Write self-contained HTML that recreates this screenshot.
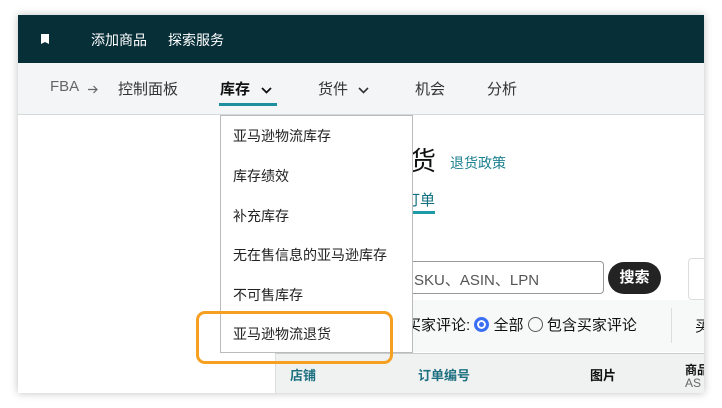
<!DOCTYPE html>
<html><head><meta charset="utf-8"><style>
*{margin:0;padding:0;box-sizing:border-box}
body{width:722px;height:408px;background:#fff;position:relative;overflow:hidden;font-family:"Liberation Sans","Noto Sans CJK SC",sans-serif;color:#0f1111}
.page{position:absolute;left:18px;top:15px;width:686px;height:378px;background:#fff;box-shadow:0 0 8px rgba(0,0,0,.25);overflow:hidden}
.hdr{position:absolute;left:0;top:0;width:100%;height:48px;background:#072f38;color:#fff;font-size:14px}
.hdr span{position:absolute;top:15px}
.nav{position:absolute;left:0;top:48px;width:100%;height:52px;background:#f3f5f6;border-bottom:1px solid #d5d9d9;font-size:15px;color:#333}
.nav span{position:absolute;top:15px}
.nav svg{position:absolute;top:24px}
.a{position:absolute;white-space:nowrap}
.menu{position:absolute;left:202px;top:100px;width:193px;height:238px;background:#fff;border:1px solid #bbb;font-size:14px;color:#222}
.menu div{position:absolute;left:12px}
</style></head><body>
<div class="page">
<div class="hdr">
<div style="position:absolute;left:23px;top:19px;width:8px;height:10px;background:#fff;clip-path:polygon(0 0,100% 0,100% 100%,50% 80%,0 100%)"></div>
<span style="left:73px">添加商品</span><span style="left:150px">探索服务</span>
</div>
<div class="nav">
<span style="left:32px;color:#666">FBA</span>
<svg style="left:70px;top:22px" width="10" height="9" viewBox="0 0 10 9"><path d="M0 4.5H9M5.5 1L9 4.5 5.5 8" fill="none" stroke="#666" stroke-width="1.2"/></svg>
<span style="left:100px">控制面板</span>
<span style="left:202px;font-weight:bold;color:#111">库存</span>
<svg style="left:243px" width="11" height="7" viewBox="0 0 11 7"><path d="M1 1L5.5 5.5 10 1" fill="none" stroke="#111" stroke-width="1.8"/></svg>
<div style="position:absolute;left:201px;top:40px;width:58px;height:3px;background:#1d8f9e"></div>
<span style="left:300px">货件</span>
<svg style="left:340px" width="11" height="7" viewBox="0 0 11 7"><path d="M1 1L5.5 5.5 10 1" fill="none" stroke="#333" stroke-width="1.6"/></svg>
<span style="left:397px">机会</span><span style="left:469px">分析</span>
</div>
<div class="a" style="left:392px;top:126px;font-size:26px">货</div>
<div class="a" style="left:432px;top:138px;font-size:14px;color:#1d8090">退货政策</div>
<div class="a" style="left:387px;top:174px;font-size:15px;color:#0f6f80">订单</div>
<div style="position:absolute;left:393px;top:196px;width:24px;height:3px;background:#1d9aa8"></div>
<div style="position:absolute;left:380px;top:246px;width:206px;height:33px;border:1px solid #999;border-radius:4px;background:#fff"></div>
<div class="a" style="left:396px;top:254px;font-size:15px;color:#555">SKU、ASIN、LPN</div>
<div style="position:absolute;left:590px;top:247px;width:53px;height:32px;border-radius:16px;background:#232323;color:#fff;font-size:15px;font-weight:bold;text-align:center;line-height:32px">搜索</div>
<div style="position:absolute;left:670px;top:243px;width:30px;height:42px;border:1px solid #ddd;border-radius:4px"></div>
<div style="position:absolute;left:257px;top:285px;width:429px;height:52px;background:#f7f8f8"></div>
<div class="a" style="left:388px;top:299px;font-size:15px">买家评论: <span style="display:inline-block;width:15px;height:15px;border-radius:50%;border:3px solid #3a6ef5;vertical-align:-2px;box-shadow:inset 0 0 0 2px #fff;background:#3a6ef5"></span> 全部 <span style="display:inline-block;width:15px;height:15px;border-radius:50%;border:1px solid #555;vertical-align:-2px"></span> 包含买家评论</div>
<div style="position:absolute;left:653px;top:293px;width:1px;height:35px;background:#ddd"></div>
<div class="a" style="left:677px;top:300px;font-size:15px">买</div>
<div style="position:absolute;left:257px;top:338px;width:429px;height:40px;background:#f0f1f1;border-top:1px solid #ccc;border-left:1px solid #ddd"></div>
<div class="a" style="left:272px;top:350px;font-size:13px;font-weight:bold;color:#1d7080">店铺</div>
<div class="a" style="left:400px;top:350px;font-size:13px;font-weight:bold;color:#1d7080">订单编号</div>
<div class="a" style="left:572px;top:350px;font-size:13px;font-weight:bold">图片</div>
<div class="a" style="left:667px;top:349px;font-size:12px;font-weight:bold;line-height:13px">商品<br><span style="font-weight:normal;color:#666">AS</span></div>
<div class="menu">
<div style="top:10px">亚马逊物流库存</div>
<div style="top:50px">库存绩效</div>
<div style="top:90px">补充库存</div>
<div style="top:129px">无在售信息的亚马逊库存</div>
<div style="top:169px">不可售库存</div>
<div style="top:208px">亚马逊物流退货</div>
</div>
<div style="position:absolute;left:178px;top:296px;width:197px;height:53px;border:3px solid #f5a020;border-radius:9px"></div>
</div>
</body></html>
